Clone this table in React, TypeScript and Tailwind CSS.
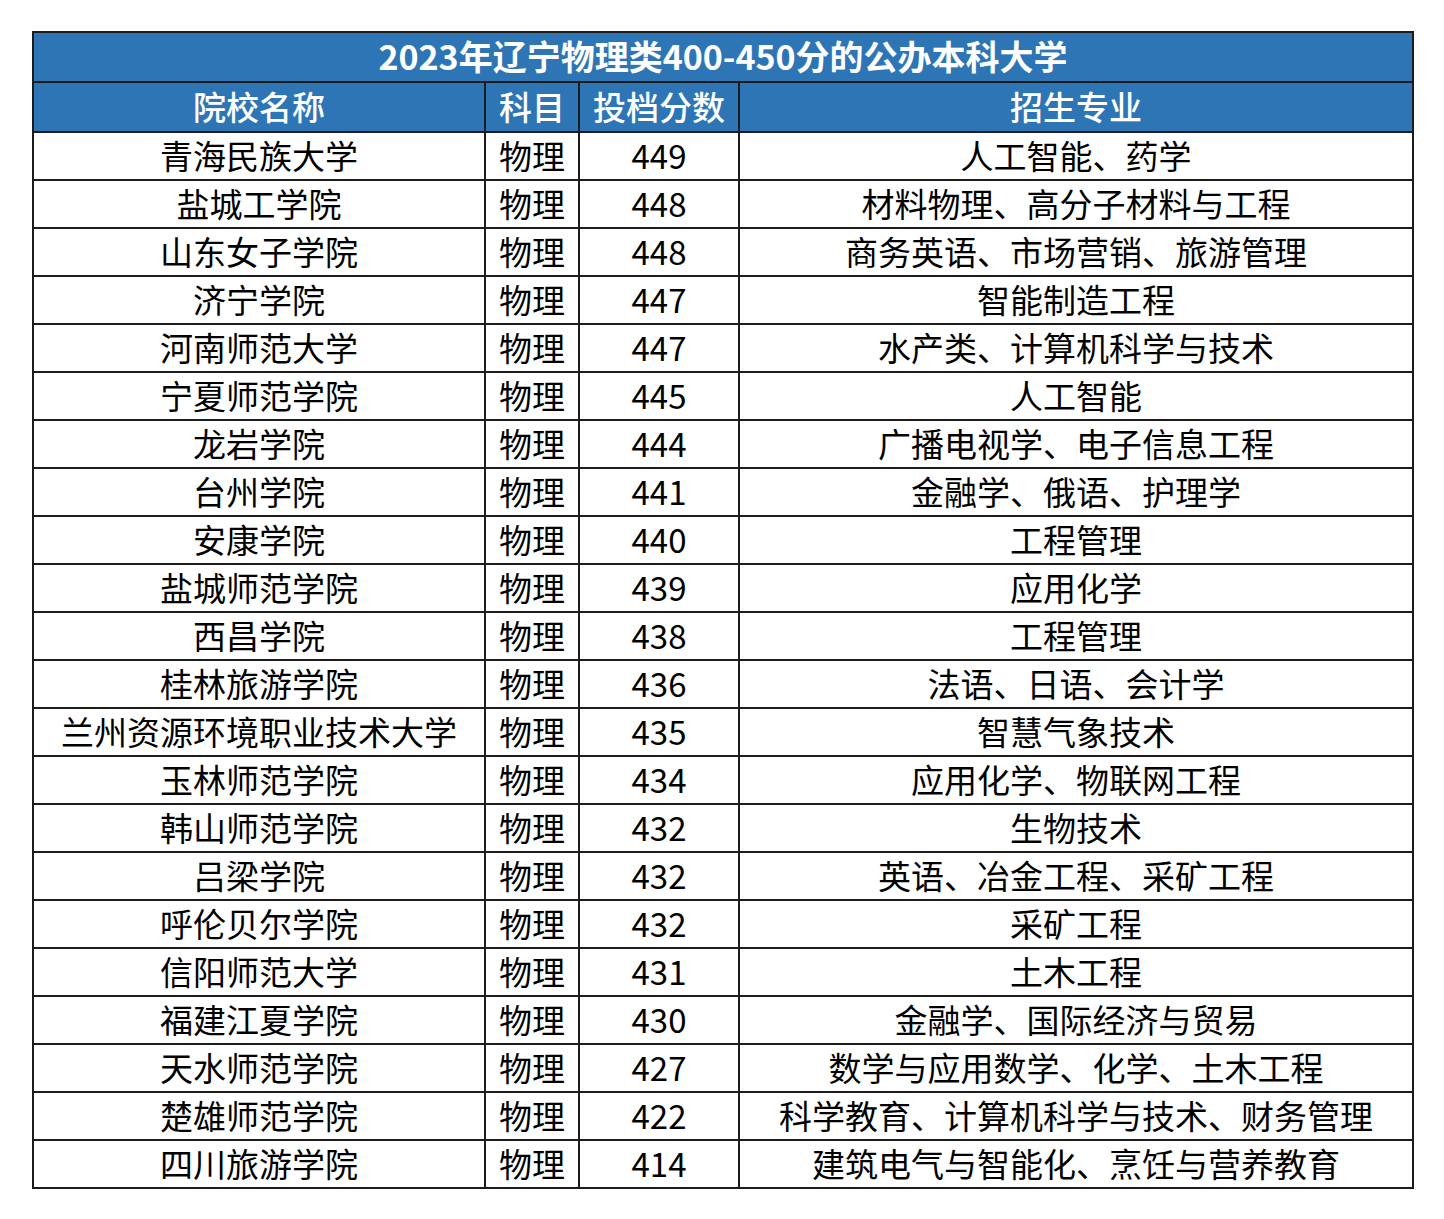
const rows: [string, string, string, string][] = [
  ['青海民族大学', '物理', '449', '人工智能、药学'],
  ['盐城工学院', '物理', '448', '材料物理、高分子材料与工程'],
  ['山东女子学院', '物理', '448', '商务英语、市场营销、旅游管理'],
  ['济宁学院', '物理', '447', '智能制造工程'],
  ['河南师范大学', '物理', '447', '水产类、计算机科学与技术'],
  ['宁夏师范学院', '物理', '445', '人工智能'],
  ['龙岩学院', '物理', '444', '广播电视学、电子信息工程'],
  ['台州学院', '物理', '441', '金融学、俄语、护理学'],
  ['安康学院', '物理', '440', '工程管理'],
  ['盐城师范学院', '物理', '439', '应用化学'],
  ['西昌学院', '物理', '438', '工程管理'],
  ['桂林旅游学院', '物理', '436', '法语、日语、会计学'],
  ['兰州资源环境职业技术大学', '物理', '435', '智慧气象技术'],
  ['玉林师范学院', '物理', '434', '应用化学、物联网工程'],
  ['韩山师范学院', '物理', '432', '生物技术'],
  ['吕梁学院', '物理', '432', '英语、冶金工程、采矿工程'],
  ['呼伦贝尔学院', '物理', '432', '采矿工程'],
  ['信阳师范大学', '物理', '431', '土木工程'],
  ['福建江夏学院', '物理', '430', '金融学、国际经济与贸易'],
  ['天水师范学院', '物理', '427', '数学与应用数学、化学、土木工程'],
  ['楚雄师范学院', '物理', '422', '科学教育、计算机科学与技术、财务管理'],
  ['四川旅游学院', '物理', '414', '建筑电气与智能化、烹饪与营养教育'],
];

const cell = 'border-2 border-[#1c1c1c] text-center p-0 pb-[2px] leading-none';

export default function App() {
  return (
    <div className="min-h-screen bg-white pt-[31px] pl-[32px] font-['Noto_Sans_CJK_SC','Noto_Sans',sans-serif]">
      <table className="table-fixed border-collapse w-[1380px] text-[33px] text-black">
        <colgroup>
          <col className="w-[452px]" />
          <col className="w-[94px]" />
          <col className="w-[160px]" />
          <col className="w-[674px]" />
        </colgroup>
        <thead>
          <tr>
            <th colSpan={4} className={`${cell} h-[50px] bg-[#2e75b6] text-white font-bold text-[34px]`}>
              2023年辽宁物理类400-450分的公办本科大学
            </th>
          </tr>
          <tr>
            <th className={`${cell} h-[50px] bg-[#2e75b6] text-white font-medium`}>院校名称</th>
            <th className={`${cell} h-[50px] bg-[#2e75b6] text-white font-medium`}>科目</th>
            <th className={`${cell} h-[50px] bg-[#2e75b6] text-white font-medium`}>投档分数</th>
            <th className={`${cell} h-[50px] bg-[#2e75b6] text-white font-medium`}>招生专业</th>
          </tr>
        </thead>
        <tbody>
          {rows.map((r) => (
            <tr key={r[0]}>
              {r.map((v, i) => (
                <td key={i} className={`${cell} h-[48px]`}>
                  {v}
                </td>
              ))}
            </tr>
          ))}
        </tbody>
      </table>
    </div>
  );
}
